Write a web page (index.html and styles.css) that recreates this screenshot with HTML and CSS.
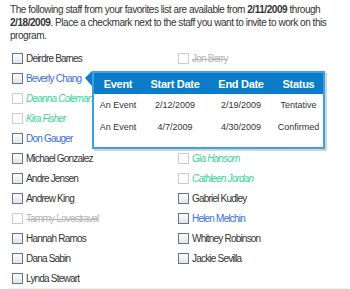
FILE: index.html
```html
<!DOCTYPE html>
<html>
<head>
<title>Invite Staff</title>
<link rel="stylesheet" href="styles.css">
</head>
<body>

<div class="page">
    <p class="intro">The following staff from your favorites list are available from <b>2/11/2009</b> through <b>2/18/2009</b>. Place a checkmark next to the staff you want to invite to work on this program.</p>

    <!-- Staff list, two columns -->
    <div class="staff-list">
        <div class="col">
            <div class="staff"><span class="box"></span><span class="name">Deirdre Barnes</span></div>
            <div class="staff has-tip">
                <span class="box"></span><span class="name booked">Beverly Chang</span>

                <!-- Schedule tooltip -->
                <div class="tip">
                    <table>
                        <thead>
                            <tr>
                                <th class="c1">Event</th>
                                <th class="c2">Start Date</th>
                                <th class="c3">End Date</th>
                                <th class="c4">Status</th>
                            </tr>
                        </thead>
                        <tbody>
                            <tr>
                                <td>An Event</td>
                                <td>2/12/2009</td>
                                <td>2/19/2009</td>
                                <td>Tentative</td>
                            </tr>
                            <tr>
                                <td>An Event</td>
                                <td>4/7/2009</td>
                                <td>4/30/2009</td>
                                <td>Confirmed</td>
                            </tr>
                        </tbody>
                    </table>
                </div>
            </div>
            <div class="staff"><span class="box off"></span><span class="name pending">Deanna Coleman</span></div>
            <div class="staff"><span class="box off"></span><span class="name pending">Kira Fisher</span></div>
            <div class="staff"><span class="box"></span><span class="name booked">Don Gauger</span></div>
            <div class="staff"><span class="box"></span><span class="name">Michael Gonzalez</span></div>
            <div class="staff"><span class="box"></span><span class="name">Andre Jensen</span></div>
            <div class="staff"><span class="box"></span><span class="name">Andrew King</span></div>
            <div class="staff"><span class="box off"></span><span class="name gone">Tammy Lovestravel</span></div>
            <div class="staff"><span class="box"></span><span class="name">Hannah Ramos</span></div>
            <div class="staff"><span class="box"></span><span class="name">Dana Sabin</span></div>
            <div class="staff"><span class="box"></span><span class="name">Lynda Stewart</span></div>
        </div>
        <div class="col">
            <div class="staff"><span class="box off"></span><span class="name gone">Jon Berry</span></div>
            <div class="staff"></div>
            <div class="staff"></div>
            <div class="staff"></div>
            <div class="staff"></div>
            <div class="staff"><span class="box off"></span><span class="name pending">Gia Hansom</span></div>
            <div class="staff"><span class="box off"></span><span class="name pending">Cathleen Jordan</span></div>
            <div class="staff"><span class="box"></span><span class="name">Gabriel Kudley</span></div>
            <div class="staff"><span class="box"></span><span class="name booked">Helen Melchin</span></div>
            <div class="staff"><span class="box"></span><span class="name">Whitney Robinson</span></div>
            <div class="staff"><span class="box"></span><span class="name">Jackie Sevilla</span></div>
        </div>
    </div>
</div>

</body>
</html>
```

FILE: styles.css
```css
body {
    margin: 0;
    font-family: "Liberation Sans", Arial, sans-serif;
    font-size: 10px;
    color: #333;
}

.page {
    padding: 3px 2px 0 8px;
}

.intro {
    margin: 0 0 6px 2px;
    line-height: 13px;
    letter-spacing: -0.45px;
}

.staff-list {
    display: grid;
    grid-template-columns: 166px 1fr;
    padding-left: 4px;
    border-bottom: 1px solid #eee;
}

.staff {
    height: 20px;
    display: flex;
    align-items: center;
    letter-spacing: -0.8px;
}

.box {
    width: 9px;
    height: 9px;
    border: 1px solid #5d7896;
    background: linear-gradient(#fff, #e4e4e4);
    margin-right: 3px;
    flex-shrink: 0;
}

.box.off {
    border-color: #ccc;
    background: #fff;
}

.name.booked {
    color: #3b6fd6;
}

.name.pending {
    color: #3dd39a;
    font-style: italic;
}

.name.gone {
    color: #b5b5b5;
    text-decoration: line-through;
}

/* tooltip */
.has-tip {
    position: relative;
}

.tip {
    position: absolute;
    left: 80px;
    top: 3px;
    width: 229px;
    height: 74px;
    background: #fff;
    border: 2px solid #3ba2e2;
    box-shadow: 2px 2px 0 #d4d4d4;
    z-index: 2;
    letter-spacing: 0;
}

.tip::before {
    content: "";
    position: absolute;
    left: -9px;
    top: -2px;
    border-top: 7px solid transparent;
    border-bottom: 8px solid transparent;
    border-right: 7px solid #0a7cc8;
}

.tip table {
    width: 100%;
    border-collapse: collapse;
    table-layout: fixed;
}

.tip th {
    background-color: #0a7cc8;
    color: #fff;
    font-size: 11px;
    letter-spacing: -0.3px;
    height: 21px;
    padding: 0;
    text-align: center;
}

.tip td {
    font-size: 9px;
    height: 22px;
    padding: 0;
    text-align: center;
}

.c1 { width: 48px; }
.c2 { width: 66px; }
.c3 { width: 66px; }
.c4 { width: 49px; }
```
